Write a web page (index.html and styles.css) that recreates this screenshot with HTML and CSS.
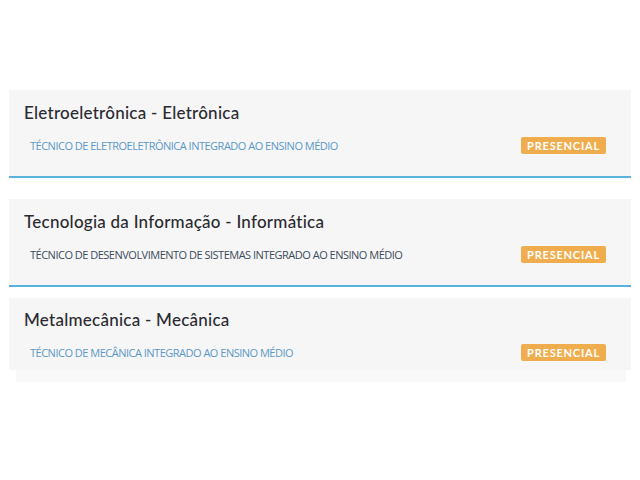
FILE: index.html
```html
<!DOCTYPE html>
<html lang="pt-BR">
<head>
<meta charset="utf-8">
<title>Cursos</title>
<link rel="stylesheet" href="styles.css">
</head>
<body>
<div class="list">
  <div class="card">
    <h3 class="title">Eletroeletrônica - Eletrônica</h3>
    <div class="row">
      <span class="course">TÉCNICO DE ELETROELETRÔNICA INTEGRADO AO ENSINO MÉDIO</span>
      <span class="badge">PRESENCIAL</span>
    </div>
  </div>
  <div class="card card-active">
    <h3 class="title">Tecnologia da Informação - Informática</h3>
    <div class="row">
      <span class="course">TÉCNICO DE DESENVOLVIMENTO DE SISTEMAS INTEGRADO AO ENSINO MÉDIO</span>
      <span class="badge">PRESENCIAL</span>
    </div>
  </div>
  <div class="card card-last">
    <h3 class="title">Metalmecânica - Mecânica</h3>
    <div class="row">
      <span class="course">TÉCNICO DE MECÂNICA INTEGRADO AO ENSINO MÉDIO</span>
      <span class="badge">PRESENCIAL</span>
    </div>
  </div>
  <div class="strip"></div>
</div>
</body>
</html>
```

FILE: styles.css
```css
html, body {
  margin: 0;
  padding: 0;
  background: #ffffff;
}
.list {
  padding: 90px 9px 0 9px;
  display: flex;
  flex-direction: column;
}
.card {
  background: #f6f6f6;
  border-bottom: 2px solid #5bb2d8;
  padding: 12px 25px 21px 15px;
  margin-bottom: 21px;
}
.card-active {
  margin-bottom: 11px;
}
.card-last {
  border-bottom: none;
  padding-top: 11px;
  padding-bottom: 8px;
  margin-bottom: 0;
}
.title {
  margin: 0;
  font-family: "Lato", "Noto Sans", sans-serif;
  font-weight: 500;
  font-size: 17px;
  line-height: 22px;
  color: #2a2a30;
  letter-spacing: 0.25px;
}
.row {
  margin-top: 12px;
  height: 19px;
  display: flex;
  align-items: center;
  justify-content: space-between;
  padding-left: 6px;
}
.course {
  font-family: "Open Sans", "Lato", sans-serif;
  font-weight: 400;
  font-size: 11px;
  letter-spacing: -0.5px;
  color: #5b98c8;
}
.card-active .course {
  color: #3d4b5a;
}
.badge {
  background: #f0ad4e;
  color: #ffffff;
  font-family: "Lato", "Noto Sans", sans-serif;
  font-weight: 700;
  font-size: 11px;
  letter-spacing: 0.8px;
  line-height: 17px;
  width: 85px;
  text-align: center;
  border-radius: 2px;
}
.strip {
  margin: 0 5px 0 7px;
  height: 12px;
  background: #f8f8f8;
}
```
